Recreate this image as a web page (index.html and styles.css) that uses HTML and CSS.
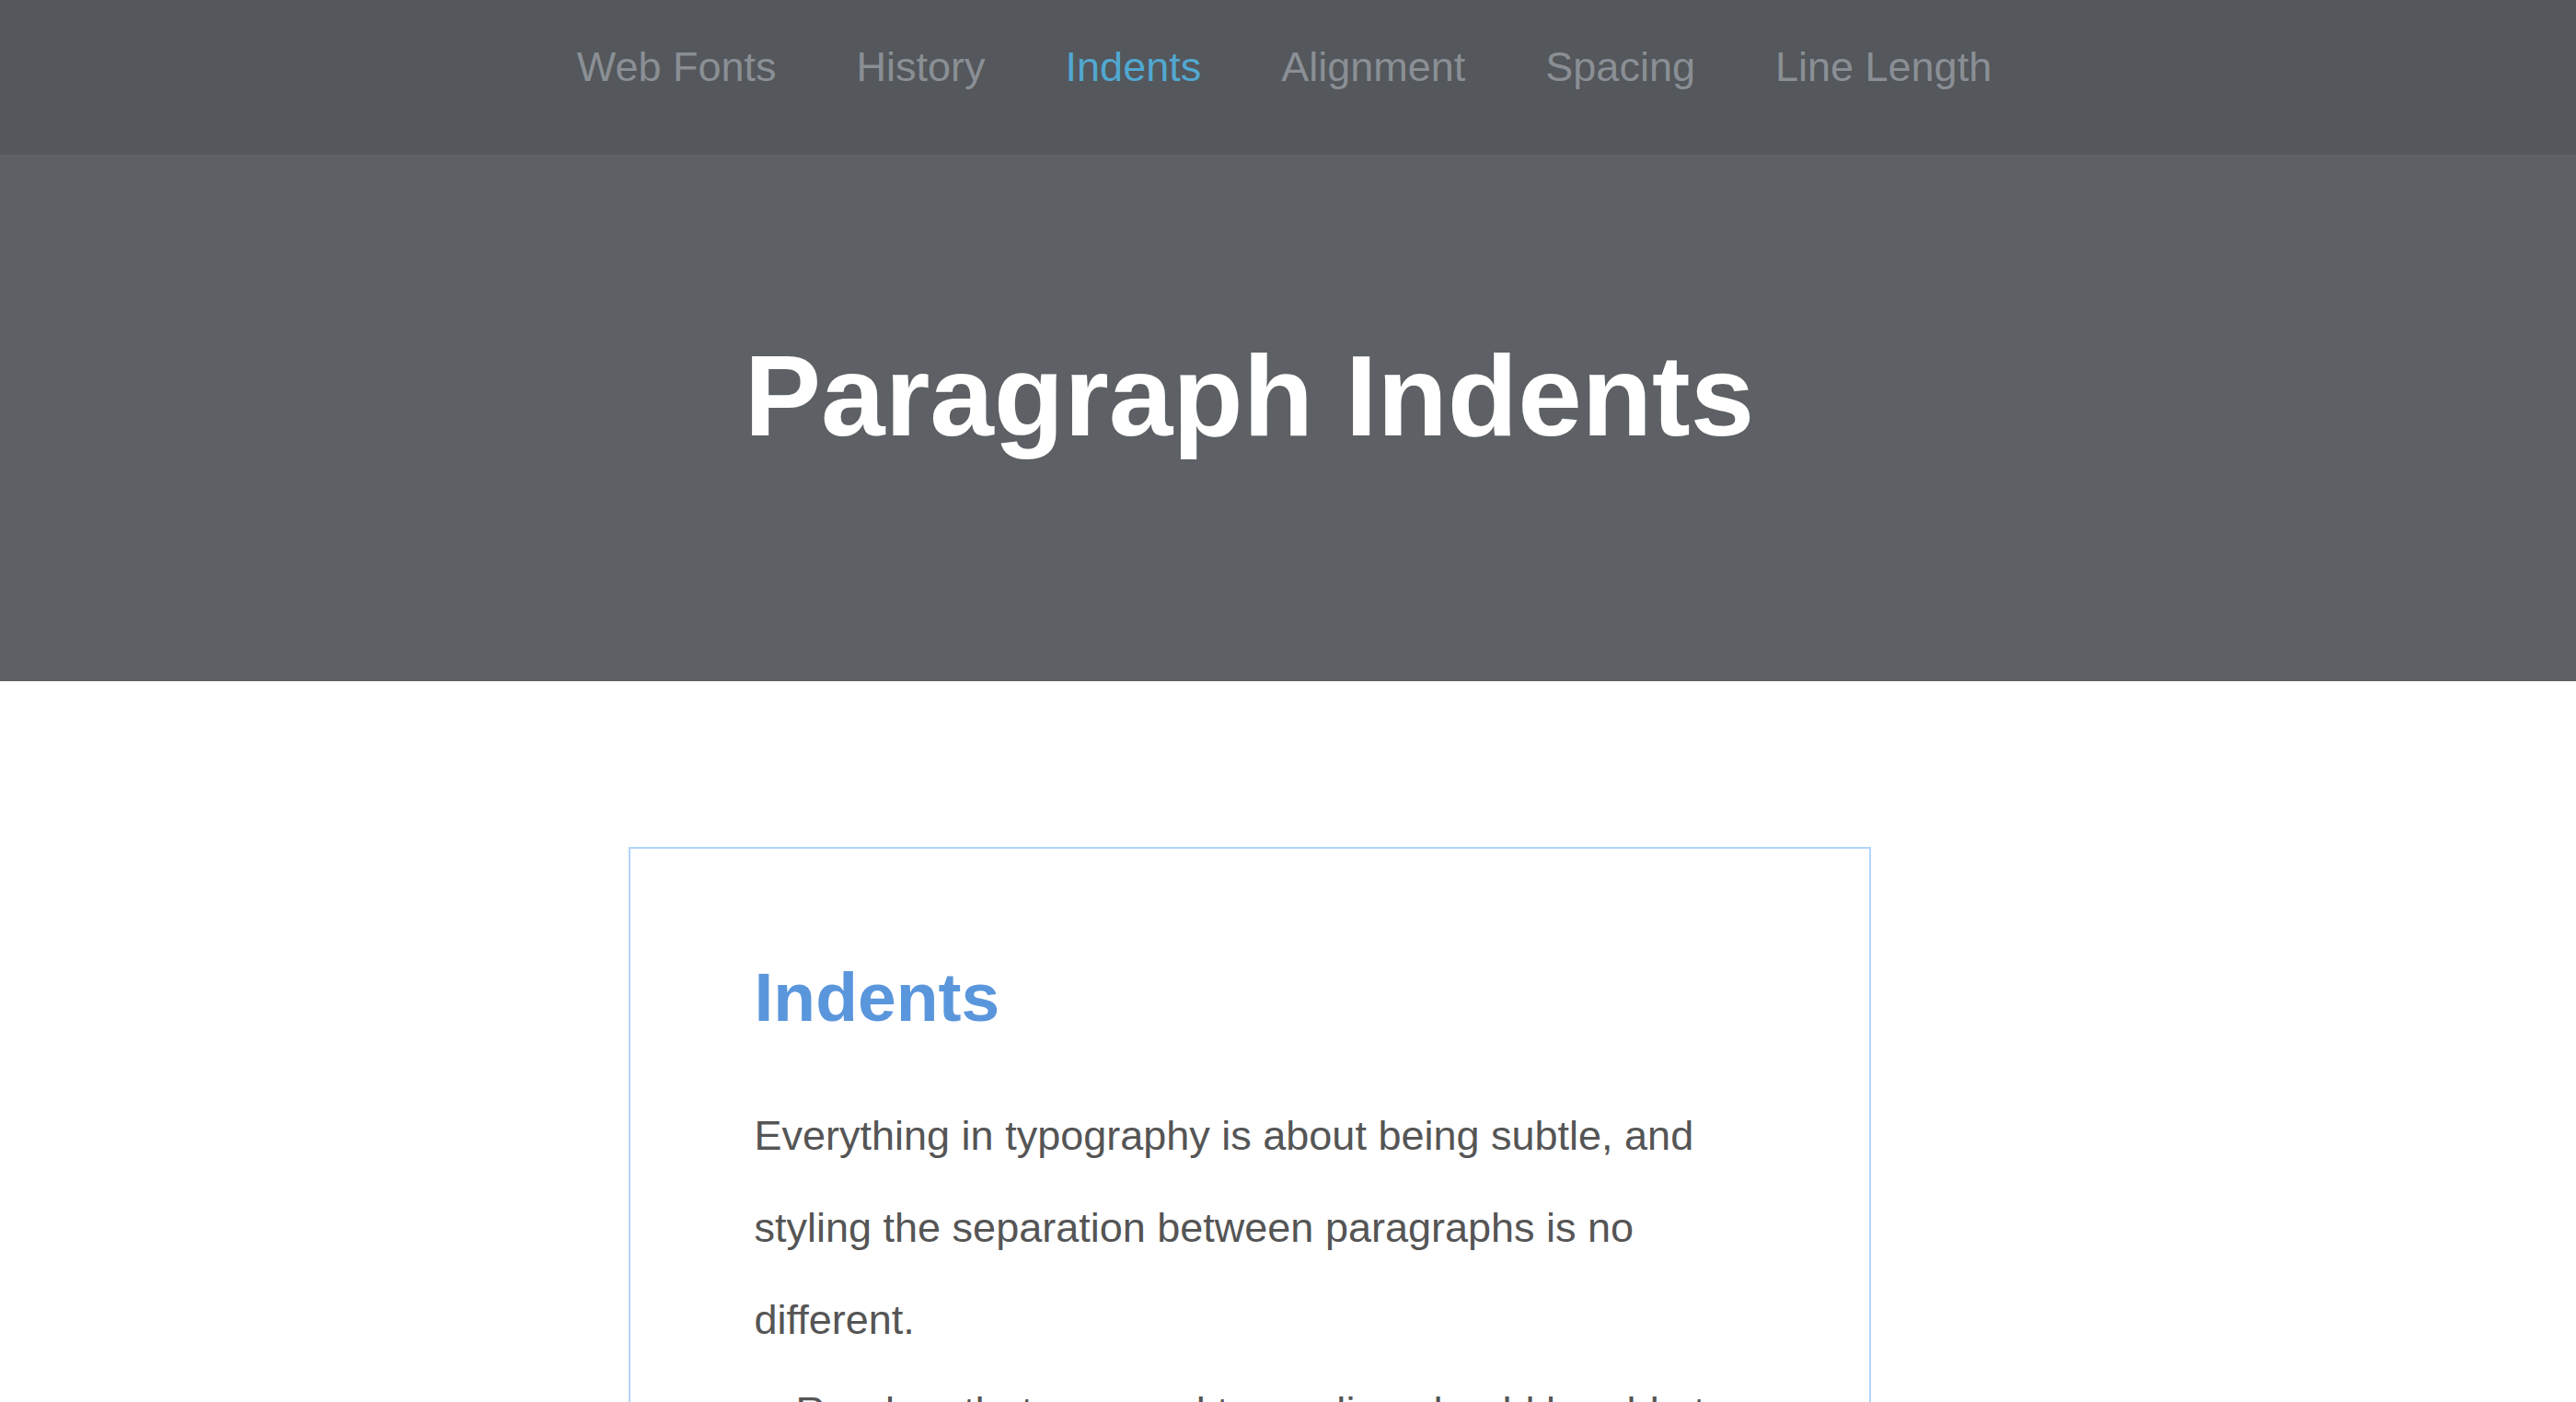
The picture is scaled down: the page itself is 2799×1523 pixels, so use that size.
FILE: index.html
```html
<!DOCTYPE html>
<html lang="en">
<head>
<meta charset="utf-8">
<title>Paragraph Indents</title>
<link rel="stylesheet" href="styles.css">
</head>
<body>
<nav class="menu">
  <ul class="menu-list">
    <li><a class="menu-link" href="#">Web Fonts</a></li>
    <li><a class="menu-link" href="#">History</a></li>
    <li><a class="menu-link is-current" href="#">Indents</a></li>
    <li><a class="menu-link" href="#">Alignment</a></li>
    <li><a class="menu-link" href="#">Spacing</a></li>
    <li><a class="menu-link" href="#">Line Length</a></li>
  </ul>
</nav>
<header class="hero">
  <h1 class="hero-title">Paragraph Indents</h1>
</header>
<main class="content">
  <section class="card">
    <h2 class="card-title">Indents</h2>
    <p class="card-text">Everything in typography is about being subtle, and styling the separation between paragraphs is no different.</p>
    <p class="card-text">Readers that are used to reading should be able to tell where a new paragraph starts, so a small indent on the first line is usually enough.</p>
  </section>
</main>
</body>
</html>
```
FILE: styles.css
```css
html, body {
  margin: 0;
  padding: 0;
}
body {
  font-family: "Liberation Sans", Arial, sans-serif;
  background: #ffffff;
  color: #555555;
}
.menu {
  box-sizing: border-box;
  height: 168px;
  background: #54575b;
  padding-top: 47px;
}
.menu-list {
  list-style: none;
  margin: 0;
  padding: 0 8px 0 0;
  display: flex;
  justify-content: center;
  gap: 87px;
}
.menu-link {
  font-size: 45px;
  line-height: normal;
  color: #8a8f95;
  text-decoration: none;
}
.menu-link.is-current {
  color: #51a8d1;
}
.hero {
  background: #5d6064;
  padding: 190px 0 239px;
  display: flex;
  justify-content: center;
}
.hero-title {
  width: 1350px;
  margin: 0 0 0 -84px;
  text-align: center;
  font-size: 125px;
  font-weight: bold;
  line-height: normal;
  color: #ffffff;
}
.content {
  display: flex;
  justify-content: center;
  padding-top: 180px;
  padding-right: 84px;
}
.card {
  box-sizing: border-box;
  width: 1350px;
  border: 2px solid #b3d4fc;
  padding: 118px 130px 120px 135px;
}
.card-title {
  margin: 0 0 58px;
  font-size: 75px;
  font-weight: bold;
  line-height: normal;
  color: #5a96dc;
}
.card-text {
  margin: 0;
  font-size: 45px;
  line-height: 100px;
  color: #555555;
}
.card-text + .card-text {
  text-indent: 1em;
}
```
